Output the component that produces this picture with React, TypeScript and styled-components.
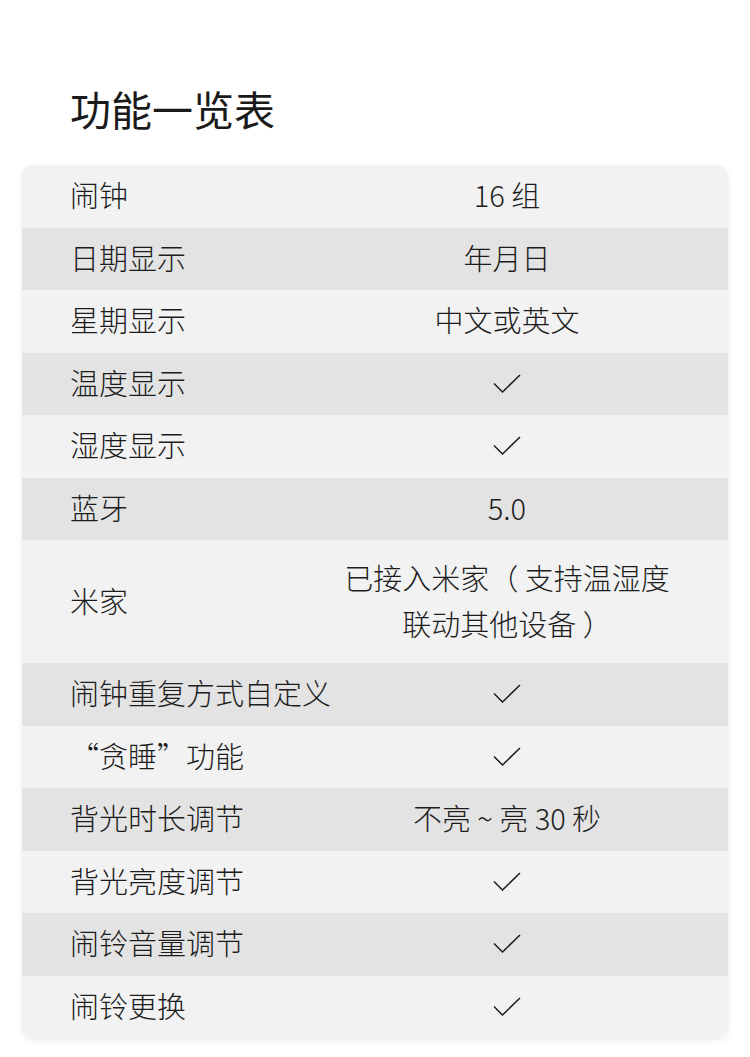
import * as React from 'react'
import styled, { createGlobalStyle } from 'styled-components'

const GlobalStyle = createGlobalStyle`
  html, body {
    margin: 0;
    padding: 0;
    background: #fff;
  }
  body {
    font-family: "Noto Sans CJK SC", "Noto Sans", sans-serif;
    color: #1c1c1c;
  }
`

const Page = styled.div`
  width: 750px;
  height: 1057px;
  box-sizing: border-box;
  padding: 87px 22px 0;
  overflow: hidden;
`

const Title = styled.h1`
  margin: 0 0 36px 48px;
  font-size: 41px;
  line-height: 42px;
  font-weight: 400;
  color: #1a1a1a;
`

const Card = styled.div`
  border-radius: 12px;
  overflow: hidden;
  box-shadow: 0 2px 6px rgba(0, 0, 0, 0.08);
`

const Row = styled.div<{ $dark: boolean; $tall?: boolean }>`
  display: grid;
  grid-template-columns: 264px 1fr;
  align-items: center;
  box-sizing: border-box;
  padding-bottom: 4px;
  height: ${p => (p.$tall ? '123px' : '62.5px')};
  background: ${p => (p.$dark ? '#e3e3e3' : '#f2f2f2')};
`

const Label = styled.div`
  padding-left: 48px;
  font-size: 29px;
  font-weight: 300;
  line-height: 46px;
  white-space: nowrap;
`

const Value = styled.div`
  text-align: center;
  font-size: 29px;
  font-weight: 300;
  line-height: 46px;
  white-space: nowrap;
`

const Check = () => (
  <svg width="28" height="19" viewBox="0 0 28 19" style={{ display: 'block', margin: '3px auto 0' }}>
    <path d="M1 9.5 L9.5 18 L27 1" fill="none" stroke="#1c1c1c" strokeWidth="1.5" />
  </svg>
)

type Item = { label: string; value: React.ReactNode; tall?: boolean }

const items: Item[] = [
  { label: '闹钟', value: '16 组' },
  { label: '日期显示', value: '年月日' },
  { label: '星期显示', value: '中文或英文' },
  { label: '温度显示', value: <Check /> },
  { label: '湿度显示', value: <Check /> },
  { label: '蓝牙', value: '5.0' },
  {
    label: '米家',
    value: (
      <>
        已接入米家（ 支持温湿度
        <br />
        联动其他设备 ）
      </>
    ),
    tall: true,
  },
  { label: '闹钟重复方式自定义', value: <Check /> },
  { label: '“贪睡”功能', value: <Check /> },
  { label: '背光时长调节', value: '不亮 ~ 亮 30 秒' },
  { label: '背光亮度调节', value: <Check /> },
  { label: '闹铃音量调节', value: <Check /> },
  { label: '闹铃更换', value: <Check /> },
]

export default function App() {
  return (
    <>
      <GlobalStyle />
      <Page>
        <Title>功能一览表</Title>
        <Card>
          {items.map((it, i) => (
            <Row key={it.label} $dark={i % 2 === 1} $tall={it.tall}>
              <Label>{it.label}</Label>
              <Value>{it.value}</Value>
            </Row>
          ))}
        </Card>
      </Page>
    </>
  )
}
